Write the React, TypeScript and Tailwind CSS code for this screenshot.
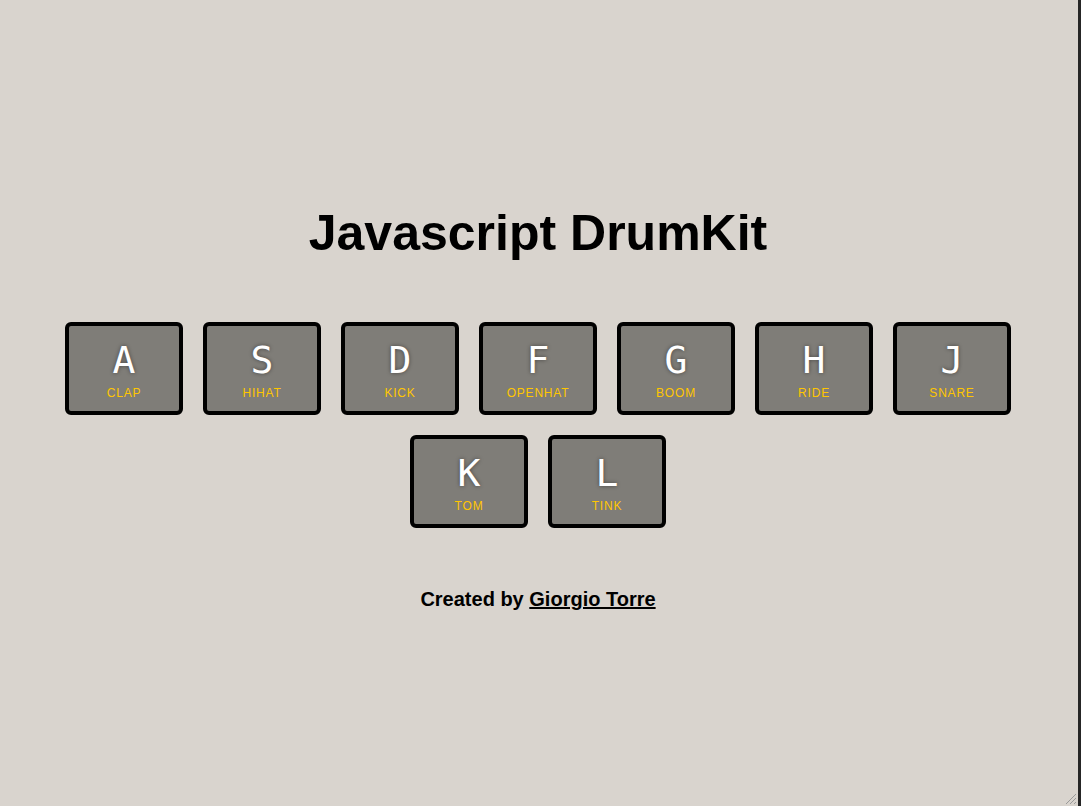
import React from "react";

const keys = [
  { k: "A", s: "clap" },
  { k: "S", s: "hihat" },
  { k: "D", s: "kick" },
  { k: "F", s: "openhat" },
  { k: "G", s: "boom" },
  { k: "H", s: "ride" },
  { k: "J", s: "snare" },
  { k: "K", s: "tom" },
  { k: "L", s: "tink" },
];

export default function App() {
  return (
    <div className="relative flex h-[806px] w-full overflow-hidden bg-[#d9d4ce]">
      <div className="flex flex-1 flex-col items-center pr-[2px] pt-[204px] [font-family:'Liberation_Sans',Arial,sans-serif]">
        <h1 className="text-[50px] font-bold leading-[58px] text-black">Javascript DrumKit</h1>
        <div className="mt-[60px] flex w-[960px] flex-wrap justify-center gap-x-5 gap-y-[20px]">
          {keys.map((x) => (
            <div
              key={x.k}
              className="flex h-[93px] w-[118px] flex-col items-center rounded-[6px] border-4 border-black bg-[#7f7d78] pt-[15px]"
            >
              <div className="text-[38px] leading-[38px] text-white [font-family:'DejaVu_Sans_Mono',monospace] [text-shadow:0_0_4px_rgba(0,0,0,0.45)]">
                {x.k}
              </div>
              <div className="mt-[6px] text-[12px] uppercase leading-[16px] tracking-[0.8px] text-[#ffc600]">
                {x.s}
              </div>
            </div>
          ))}
        </div>
        <p className="mt-[59px] text-[20px] font-bold leading-[24px] text-black">
          Created by <a className="underline">Giorgio Torre</a>
        </p>
      </div>
      <div className="w-[3px] bg-[#262626]" />
      <svg className="absolute bottom-[1px] right-[4px]" width="13" height="13" viewBox="0 0 13 13">
        <path d="M12 2 L2 12 M12 6 L6 12 M12 10 L10 12" stroke="#9a9a9a" strokeWidth="1" />
      </svg>
    </div>
  );
}
